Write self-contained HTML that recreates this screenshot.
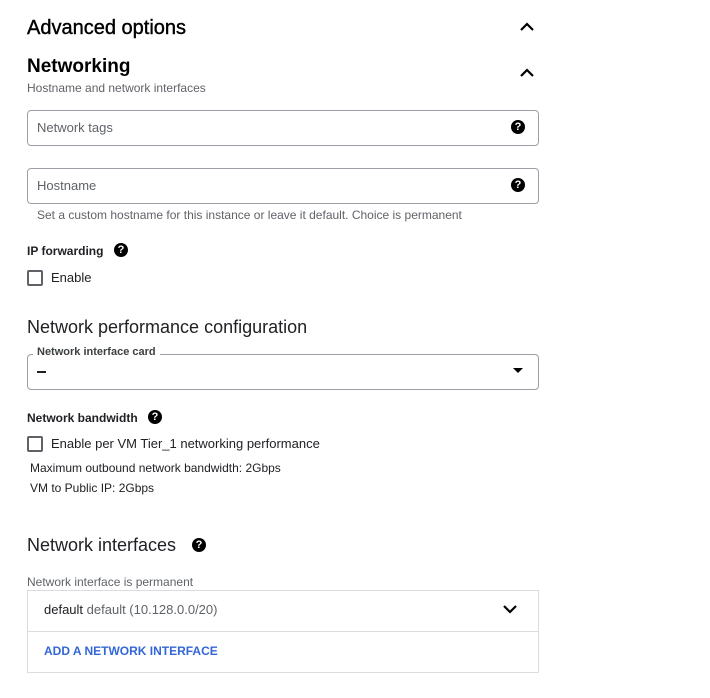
<!DOCTYPE html>
<html><head><style>
body{margin:0;width:710px;height:698px;background:#fff;font-family:"Liberation Sans",sans-serif;color:#202124;position:relative;overflow:hidden}
.a{position:absolute;white-space:nowrap}
.box{position:absolute;left:27px;width:510px;height:34px;border:1px solid #9aa0a6;border-radius:4px}
.q{position:absolute;width:14px;height:14px;border-radius:50%;background:#000;color:#fff;font-size:11px;font-weight:bold;text-align:center;line-height:14px}
.cb{position:absolute;left:27px;width:12px;height:12px;border:2px solid #5f6368;border-radius:2px}
</style></head><body>
<div class="a" style="left:27px;top:17px;font-size:20px;-webkit-text-stroke:0.4px #000;color:#000">Advanced options</div>
<svg class="a" style="left:519px;top:21px" width="16" height="12"><path d="M2 9 L8 3 L14 9" fill="none" stroke="#000" stroke-width="2.2"/></svg>
<div class="a" style="left:27px;top:56px;font-size:19px;font-weight:bold;color:#000">Networking</div>
<svg class="a" style="left:519px;top:67px" width="16" height="12"><path d="M2 9 L8 3 L14 9" fill="none" stroke="#000" stroke-width="2.2"/></svg>
<div class="a" style="left:27px;top:81px;font-size:12px;color:#5f6368">Hostname and network interfaces</div>
<div class="box" style="top:110px"></div>
<div class="a" style="left:37px;top:120px;font-size:13px;color:#5f6368">Network tags</div>
<div class="q" style="left:511px;top:120px">?</div>
<div class="box" style="top:168px"></div>
<div class="a" style="left:37px;top:178px;font-size:13px;color:#5f6368">Hostname</div>
<div class="q" style="left:511px;top:178px">?</div>
<div class="a" style="left:37px;top:208px;font-size:12px;color:#5f6368">Set a custom hostname for this instance or leave it default. Choice is permanent</div>
<div class="a" style="left:27px;top:244px;font-size:12px;font-weight:bold">IP forwarding</div>
<div class="q" style="left:114px;top:243px">?</div>
<div class="cb" style="top:270px"></div>
<div class="a" style="left:51px;top:270px;font-size:13px">Enable</div>
<div class="a" style="left:27px;top:317px;font-size:18px">Network performance configuration</div>
<div class="box" style="top:354px"></div>
<div class="a" style="left:33px;top:346px;font-size:11px;font-weight:bold;background:#fff;padding:0 4px;color:#3c4043">Network interface card</div>
<div class="a" style="left:37px;top:371px;width:9px;height:1.5px;background:#202124"></div>
<svg class="a" style="left:513px;top:368px" width="11" height="6"><path d="M0 0 L10 0 L5 5Z" fill="#000"/></svg>
<div class="a" style="left:27px;top:411px;font-size:12px;font-weight:bold">Network bandwidth</div>
<div class="q" style="left:148px;top:410px">?</div>
<div class="cb" style="top:436px"></div>
<div class="a" style="left:51px;top:436px;font-size:13px">Enable per VM Tier_1 networking performance</div>
<div class="a" style="left:30px;top:461px;font-size:12px">Maximum outbound network bandwidth: 2Gbps</div>
<div class="a" style="left:30px;top:481px;font-size:12px">VM to Public IP: 2Gbps</div>
<div class="a" style="left:27px;top:535px;font-size:18px">Network interfaces</div>
<div class="q" style="left:192px;top:538px">?</div>
<div class="a" style="left:27px;top:575px;font-size:12px;color:#5f6368">Network interface is permanent</div>
<div class="a" style="left:27px;top:590px;width:510px;height:81px;border:1px solid #dadce0"></div>
<div class="a" style="left:28px;top:631px;width:510px;height:1px;background:#dadce0"></div>
<div class="a" style="left:44px;top:602px;font-size:13px">default <span style="color:#5f6368">default (10.128.0.0/20)</span></div>
<svg class="a" style="left:502px;top:604px" width="16" height="10"><path d="M2 2 L8 8 L14 2" fill="none" stroke="#000" stroke-width="2.2"/></svg>
<div class="a" style="left:44px;top:644px;font-size:12px;font-weight:bold;color:#3367d6">ADD A NETWORK INTERFACE</div>
</body></html>
